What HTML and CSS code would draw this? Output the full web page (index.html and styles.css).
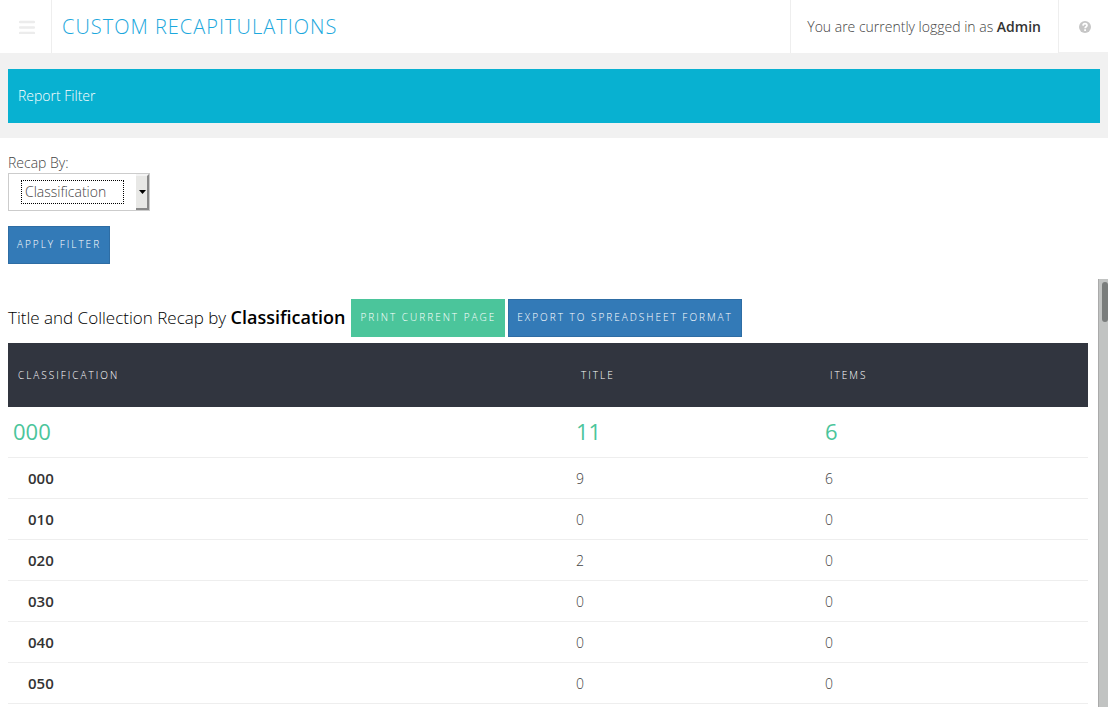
FILE: index.html
```html
<!DOCTYPE html>
<html lang="en">
<head>
<meta charset="utf-8">
<meta name="viewport" content="width=device-width, initial-scale=1">
<title>Custom Recapitulations</title>
<link rel="stylesheet" href="styles.css">
</head>
<body>
<header class="topbar">
  <button class="menu-button" type="button" aria-label="Menu">
    <svg width="16" height="14" viewBox="0 0 16 14" aria-hidden="true"><path d="M1 2h14M1 7.500h14M1 13h14" stroke="#ececec" stroke-width="2.400" stroke-linecap="round"/></svg>
  </button>
  <h1 class="page-title">Custom Recapitulations</h1>
  <p class="login">You are currently logged in as <strong>Admin</strong></p>
  <a class="help" href="#" aria-label="Help">
    <svg width="12" height="12" viewBox="0 0 12 12" aria-hidden="true"><circle cx="6" cy="6" r="6" fill="#c6c6c6"/><path d="M4 4.600C4.100 3.200 5 2.700 6 2.700c1.200 0 2 .7 2 1.700 0 1.300-1.900 1.400-1.900 2.800" fill="none" stroke="#fff" stroke-width="1.700"/><path d="M5.200 8.200h1.800v1.700H5.200z" fill="#fff"/></svg>
  </a>
</header>
<div class="filter-band"><h2 class="filter-heading">Report Filter</h2></div>
<form class="filter-form">
  <label for="recap">Recap By:</label>
  <div class="select-box">
    <select id="recap"><option>Classification</option></select>
    <span class="select-arrow"><svg width="7" height="4" viewBox="0 0 7 4" aria-hidden="true"><path d="M0 0h7L3.500 4z"/></svg></span>
  </div>
  <button class="button" type="button">Apply Filter</button>
</form>
<main class="report">
  <div class="report-body">
    <div class="report-head">
      <h2 class="report-title">Title and Collection Recap by <strong>Classification</strong></h2>
      <div class="actions">
        <button class="button button-green" type="button">Print Current Page</button>
        <button class="button" type="button">Export to Spreadsheet Format</button>
      </div>
    </div>
    <table class="recap-table">
      <colgroup><col class="col-class"><col class="col-title"><col></colgroup>
      <thead><tr><th scope="col">Classification</th><th scope="col">Title</th><th scope="col">Items</th></tr></thead>
      <tbody>
        <tr class="group"><th scope="row">000</th><td>11</td><td>6</td></tr>
        <tr><th scope="row">000</th><td>9</td><td>6</td></tr>
        <tr><th scope="row">010</th><td>0</td><td>0</td></tr>
        <tr><th scope="row">020</th><td>2</td><td>0</td></tr>
        <tr><th scope="row">030</th><td>0</td><td>0</td></tr>
        <tr><th scope="row">040</th><td>0</td><td>0</td></tr>
        <tr><th scope="row">050</th><td>0</td><td>0</td></tr>
      </tbody>
    </table>
  </div>
  <div class="scroll-track"><div class="scroll-thumb"></div></div>
</main>
</body>
</html>
```
FILE: styles.css
```css
* { box-sizing: border-box; }
body {
  margin: 0;
  min-height: 100vh;
  display: flex;
  flex-direction: column;
  background: #fff;
  color: #444;
  font: 300 14px/20px "Open Sans", sans-serif;
}
h1, h2, p { margin: 0; font-weight: 300; }
strong { font-weight: 600; }

.topbar {
  display: flex;
  align-items: stretch;
  height: 53px;
}
.menu-button {
  display: flex;
  align-items: center;
  justify-content: center;
  width: 52px;
  padding: 0 0 0 2px;
  border: 0;
  border-right: 1px solid #eee;
  background: none;
}
.page-title {
  flex: 1;
  padding-left: 10px;
  color: #1ca8dd;
  font-size: 20px;
  line-height: 54px;
  letter-spacing: 1px;
  text-transform: uppercase;
}
.login {
  padding: 0 17px 0 16px;
  border-left: 1px solid #eee;
  border-right: 1px solid #eee;
  line-height: 54px;
}
.login strong { color: #333; }
.help {
  display: flex;
  align-items: center;
  justify-content: center;
  width: 49px;
  padding: 2px 0 0 3px;
  border-bottom: 1px solid #f1f1f1;
}

.filter-band {
  padding: 16px 8px 15px;
  background: #f1f1f1;
}
.filter-heading {
  padding: 17px 10px;
  background: #08b1d1;
  color: #fff;
  font-size: 14px;
}

.filter-form {
  display: flex;
  flex-direction: column;
  align-items: flex-start;
  padding: 15px 8px;
}
.select-box {
  display: flex;
  align-items: stretch;
  width: 142px;
  height: 38px;
  margin-bottom: 15px;
  border: 1px solid #ccc;
}
.select-box select {
  flex: 1;
  min-width: 0;
  height: 24px;
  margin: 6px 12px;
  padding: 0 3px;
  appearance: none;
  border: 1px dotted #000;
  border-radius: 0;
  background: #fff;
  color: #444;
  font: inherit;
}
.select-arrow {
  display: flex;
  align-items: center;
  justify-content: center;
  width: 13px;
  padding-left: 1px;
  border: solid #888;
  border-width: 0 2px 2px 0;
  border-top: 2px solid #f4f4f4;
  background: #e8e8e6;
}

.button {
  height: 38px;
  padding: 0 8px 2px;
  border: 1px solid #2e6da4;
  background: #337ab7;
  color: #fff;
  font: 300 10px/20px "Open Sans", sans-serif;
  letter-spacing: 2px;
  text-transform: uppercase;
  white-space: nowrap;
}
.button-green {
  border-color: #4bc59b;
  background: #4bc59b;
}

.report {
  display: flex;
  flex: 1;
}
.report-body {
  flex: 1;
  padding: 20px 10px 0 8px;
}
.report-head {
  display: flex;
  align-items: center;
  gap: 6px;
  margin-bottom: 6px;
}
.report-title {
  padding-bottom: 2px;
  color: #000;
  font-size: 17px;
  line-height: 30px;
}
.report-title strong { font-size: 18px; }
.actions { display: flex; gap: 3px; }

.recap-table {
  width: 100%;
  table-layout: fixed;
  border-collapse: separate;
  border-spacing: 0;
}
.col-class { width: 52.13%; }
.col-title { width: 23.06%; }
.recap-table th { text-align: left; }
.recap-table thead th {
  height: 64px;
  padding: 0 10px;
  background: #31353f;
  color: #fff;
  font-size: 10px;
  font-weight: 300;
  letter-spacing: 2px;
  text-transform: uppercase;
}
.recap-table tbody th,
.recap-table tbody td {
  height: 41px;
  padding: 2px 5px 0;
  border-bottom: 1px solid #eee;
}
.recap-table tbody th {
  padding: 0 5px 0 20px;
  color: #333;
  font-size: 15px;
  font-weight: 600;
}
.recap-table .group th,
.recap-table .group td {
  height: 51px;
  padding: 0 5px 2px;
  color: #4bc59b;
  font-size: 22px;
  font-weight: 400;
}

.scroll-track {
  width: 10px;
  padding: 3px 0 0 3px;
  border-left: 1px solid #aaa;
  background: #c1c3c2;
}
.scroll-thumb {
  height: 40px;
  border-radius: 3px;
  background: #7a7d7c;
}
```
